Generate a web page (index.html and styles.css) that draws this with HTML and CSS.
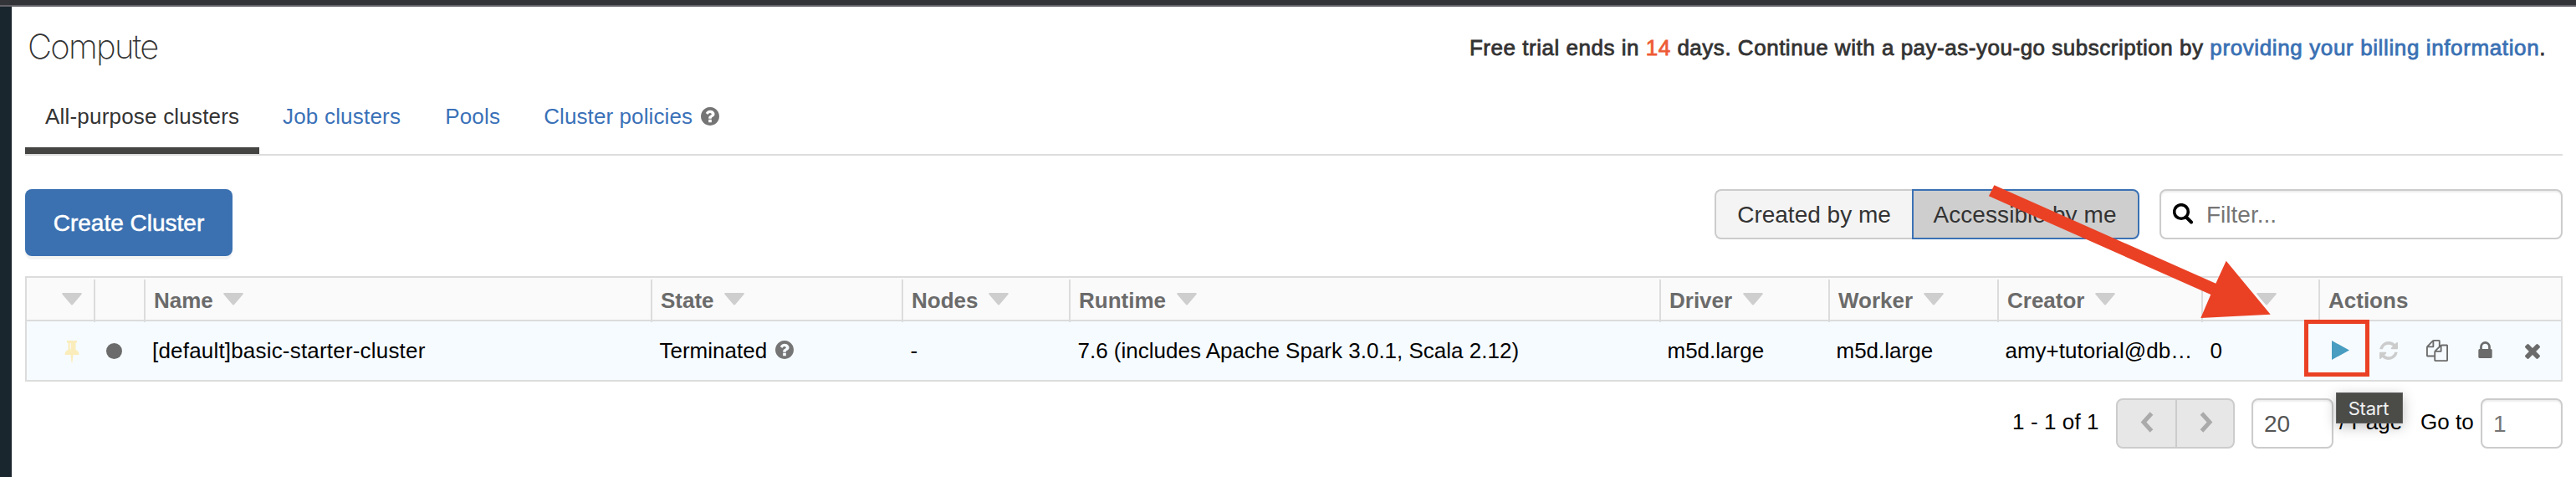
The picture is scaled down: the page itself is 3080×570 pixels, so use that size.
FILE: index.html
```html
<!DOCTYPE html>
<html lang="en">
<head>
<meta charset="utf-8">
<title>Compute</title>
<link rel="stylesheet" href="styles.css">
</head>
<body>
<svg class="defs" width="0" height="0">
  <symbol id="tri" viewBox="0 0 24 15"><path d="M1.500 0h21Q24.500 0 23.500 1.800L13.500 13.500Q12 15.500 10.500 13.500L.5 1.800Q-.5 0 1.500 0z"/></symbol>
  <symbol id="help" viewBox="0 0 1536 1536"><path d="M896 1248v-192q0-14-9-23t-23-9H672q-14 0-23 9t-9 23v192q0 14 9 23t23 9h192q14 0 23-9t9-23zm256-672q0-88-55.500-163T958 297t-170-41q-243 0-371 213-15 24 8 42l132 100q7 6 19 6 16 0 25-12 53-68 86-92 34-24 86-24 48 0 85.500 26t37.500 59q0 38-20 61t-68 45q-63 28-115.500 86.500T640 892v36q0 14 9 23t23 9h192q14 0 23-9t9-23q0-19 21.500-49.500T972 829q32-18 49-28.500t46-35 44.500-48 28-60.500 12.500-81zm384 192q0 209-103 385.500T1153.500 1433 768 1536t-385.500-103T103 1153.500 0 768t103-385.500T382.500 103 768 0t385.500 103T1433 382.500 1536 768z"/></symbol>
</svg>
<div class="topbar"></div>
<div class="shell">
  <aside class="side"></aside>
  <main class="main">
    <header class="head">
      <h1 class="title">Compute</h1>
      <p class="trial">Free trial ends in <b class="days">14</b> days. Continue with a pay-as-you-go subscription by <a class="link">providing your billing information</a>.</p>
    </header>
    <nav class="tabs">
      <a class="tab active">All-purpose clusters</a>
      <a class="tab">Job clusters</a>
      <a class="tab">Pools</a>
      <a class="tab policies">Cluster policies<svg class="help"><use href="#help"/></svg></a>
    </nav>
    <section class="tools">
      <button class="create">Create Cluster</button>
      <div class="right">
        <div class="seg"><span class="opt first">Created by me</span><span class="opt on">Accessible by me</span></div>
        <div class="filter"><svg class="search" viewBox="0 0 24 25"><circle cx="10" cy="10" r="8.300" fill="none" stroke="#000" stroke-width="3.600"/><path d="M16 16.500l6 6" stroke="#000" stroke-width="4" stroke-linecap="round"/></svg><span>Filter...</span></div>
      </div>
    </section>
    <div class="table">
      <div class="row hrow">
        <div class="c pinh"><svg class="tri"><use href="#tri"/></svg></div>
        <div class="c"></div>
        <div class="c">Name<svg class="tri"><use href="#tri"/></svg></div>
        <div class="c">State<svg class="tri"><use href="#tri"/></svg></div>
        <div class="c">Nodes<svg class="tri"><use href="#tri"/></svg></div>
        <div class="c">Runtime<svg class="tri"><use href="#tri"/></svg></div>
        <div class="c">Driver<svg class="tri"><use href="#tri"/></svg></div>
        <div class="c">Worker<svg class="tri"><use href="#tri"/></svg></div>
        <div class="c">Creator<svg class="tri"><use href="#tri"/></svg></div>
        <div class="c lasth"><svg class="tri"><use href="#tri"/></svg></div>
        <div class="c">Actions</div>
      </div>
      <div class="row drow">
        <div class="d pin"><svg class="pinicon" viewBox="0 0 18 26"><path d="M3 0h12v2.500h-1.500V11q4 1.500 4 6h-7L9.500 26h-1L7.500 17h-7q0-4.500 4-6V2.500H3z"/><path d="M7.200 3v7.500" stroke="#f7fbff" stroke-width="1"/></svg></div>
        <div class="d dotcell"><i class="dot"></i></div>
        <div class="d name">[default]basic-starter-cluster</div>
        <div class="d">Terminated<svg class="help"><use href="#help"/></svg></div>
        <div class="d">-</div>
        <div class="d run">7.6 (includes Apache Spark 3.0.1, Scala 2.12)</div>
        <div class="d spec">m5d.large</div>
        <div class="d spec">m5d.large</div>
        <div class="d creator">amy+tutorial@db…</div>
        <div class="d">0</div>
        <div class="d acts">
          <svg class="play" viewBox="0 0 21 23"><path d="M0 0v23l21-11.500z"/></svg>
          <svg class="refresh" viewBox="0 0 1536 1536"><path d="M1511 928q0 5-1 7-64 268-268 434.500T764 1536q-146 0-282.500-55T238 1324l-129 129q-19 19-45 19t-45-19-19-45V960q0-26 19-45t45-19h448q26 0 45 19t19 45-19 45l-137 137q71 66 161 102t187 36q134 0 250-65t186-179q11-17 53-117 8-23 30-23h192q13 0 22.500 9.500t9.500 22.500zm25-800v448q0 26-19 45t-45 19h-448q-26 0-45-19t-19-45 19-45l138-138Q969 256 768 256q-134 0-250 65T332 500q-11 17-53 117-8 23-30 23H50q-13 0-22.500-9.500T18 608v-7q65-268 270-434.500T768 0q146 0 284 55.500T1297 212l130-129q19-19 45-19t45 19 19 45z"/></svg>
          <svg class="copy" viewBox="0 0 1792 1792"><path d="M1696 384q40 0 68 28t28 68v1216q0 40-28 68t-68 28H736q-40 0-68-28t-28-68v-288H96q-40 0-68-28t-28-68V640q0-40 20-88t48-76L476 68q28-28 76-48t88-20h416q40 0 68 28t28 68v328q68-40 128-40h416zm-544 213L853 896h299V597zM512 213L213 512h299V213zm196 647l316-316V128H640v416q0 40-28 68t-68 28H128v640h512v-256q0-40 20-88t48-76zm956 804V512h-384v416q0 40-28 68t-68 28H768v640h896z"/></svg>
          <svg class="lock" viewBox="0 0 1152 1408"><path d="M320 640h512V448q0-106-75-181t-181-75-181 75-75 181v192zm832 96v576q0 40-28 68t-68 28H96q-40 0-68-28t-28-68V736q0-40 28-68t68-28h32V448q0-184 132-316T576 0t316 132 132 316v192h32q40 0 68 28t28 68z"/></svg>
          <svg class="del" viewBox="0 0 1188 1188"><path d="M1188 956q0 40-28 68l-136 136q-28 28-68 28t-68-28L594 866l-294 294q-28 28-68 28t-68-28L28 1024Q0 996 0 956t28-68l294-294L28 300Q0 272 0 232t28-68L164 28q28-28 68-28t68 28l294 294L888 28q28-28 68-28t68 28l136 136q28 28 28 68t-28 68L866 594l294 294q28 28 28 68z"/></svg>
        </div>
      </div>
    </div>
    <footer class="pager">
      <span class="count">1 - 1 of 1</span>
      <div class="btns"><span class="pb"><svg class="chev" viewBox="0 0 17 25"><path d="M13.500 2L4 12.500 13.500 23"/></svg></span><span class="pb"><svg class="chev" viewBox="0 0 17 25"><path d="M3.500 2L13 12.500 3.500 23"/></svg></span></div>
      <div class="box size">20</div>
      <span class="per">/ Page</span>
      <span class="goto">Go to</span>
      <div class="box page">1</div>
    </footer>
  </main>
</div>
<div class="tip">Start</div>
<div class="mark"></div>
<svg class="arrow" viewBox="2370 215 350 170"><path d="M2384.400 221.300L2649.300 338.700L2661.700 311.700L2714.700 375.700L2631.300 380L2643.300 352L2377.900 234.300z"/></svg>
</body>
</html>
```
FILE: styles.css
```css
* { box-sizing: border-box; }
body { margin: 0; width: 3080px; height: 570px; overflow: hidden; background: #fff; position: relative; color: #333; font: 26px/30px "Liberation Sans", Arial, sans-serif; }
.defs { position: absolute; }
svg { flex: none; display: block; }
.topbar { height: 8px; background: #333438; border-bottom: 2px solid #64636a; }
.shell { display: flex; height: 562px; }
.side { width: 14px; background: #1a262d; flex: none; }
.main { flex: 1; padding: 0 16px; }
.head { display: flex; justify-content: space-between; height: 109px; }
.title { margin: 24px 0 0 3px; font: 200 40px/48px Inter, "Liberation Sans", sans-serif; letter-spacing: -1.750px; }
.trial { margin: 34px 20px 0 0; line-height: 30px; -webkit-text-stroke: .8px currentColor; letter-spacing: .520px; white-space: nowrap; }
.days { font-weight: 400; color: #ee5a35; }
.link { color: #3a71b4; letter-spacing: .620px; }
.tabs { display: flex; height: 69px; border-bottom: 2px solid #ddd; color: #3a71b8; }
.tab { display: flex; padding: 7px 25px 0 28px; height: 67px; line-height: 30px; letter-spacing: .2px; white-space: nowrap; }
.tab.active { color: #333; width: 280px; padding: 7px 0 0 24px; border-bottom: 8px solid #444442; }
.tab.active + .tab { padding-left: 28px; }
.tab.policies { padding-left: 27px; letter-spacing: .1px; }
.help { width: 22px; height: 22px; fill: #757575; margin: 4px 0 0 10px; }
.tools { display: flex; justify-content: space-between; padding-top: 40px; height: 144px; }
.create { width: 248px; height: 80px; border: 0; border-radius: 8px; background: #3b71b1; color: #fff; font: 28px/34px "Liberation Sans", Arial, sans-serif; -webkit-text-stroke: .5px #fff; padding: 1px 0 0; box-shadow: 0 4px 0 #f4f4f4; }
.right { display: flex; gap: 24px; font-size: 28px; }
.seg { display: flex; height: 60px; line-height: 58px; }
.opt { border: 2px solid #ccc; text-align: center; }
.first { width: 236px; border-right: 0; border-radius: 8px 0 0 8px; background: #f4f4f4; }
.on { width: 272px; border-color: #3a71b4; border-radius: 0 8px 8px 0; background: #cecece; letter-spacing: .080px; padding-right: 2px; }
.filter { width: 482px; height: 60px; border: 2px solid #ccc; border-radius: 8px; display: flex; padding-left: 14px; gap: 16px; color: #757575; line-height: 58px; box-shadow: inset 0 2px 2px #eee; }
.search { width: 24px; height: 25px; margin-top: 15px; }
.table { border: 2px solid #dcdcdc; }
.row { display: grid; grid-template-columns: 82px 60px 606px 300px 200px 706px 202px 202px 244px 140px 288px; }
.hrow { height: 50px; background: #fafafa; font-weight: 700; color: #6b6b6b; padding-top: 2px; }
.c { display: flex; line-height: 51px; border-right: 2px solid #dcdcdc; padding-left: 10px; }
.c:last-child { border: 0; }
.tri { width: 24px; height: 15px; fill: #cecece; margin: 16px 0 0 12.500px; }
.pinh .tri { margin-left: 32px; }
.lasth .tri { margin-left: 54px; }
.drow { height: 72px; border-top: 2px solid #dcdcdc; background: #f6fbff; color: #000; line-height: 70px; }
.d { display: flex; padding-left: 8.500px; white-space: nowrap; }
.name { padding-left: 8px; letter-spacing: .190px; }
.spec, .creator { padding-left: 7.500px; }
.drow .help { margin: 23px 0 0 10px; }
.pin { padding: 23px 0 0 45px; }
.pinicon { width: 18px; height: 26px; fill: #faedbb; }
.dot { width: 19px; height: 19px; border-radius: 50%; background: #6b6b6b; margin: 26px 0 0 4px; }
.acts { padding: 0 0 0 14px; fill: #6b6b6b; align-items: flex-start; }
.play { width: 21px; height: 23px; fill: #489dc0; margin-top: 23px; }
.refresh { width: 22px; height: 22px; fill: #ccc; margin: 24px 0 0 36px; }
.copy { width: 26px; height: 26px; margin: 22px 0 0 34px; }
.lock { width: 17px; height: 20px; margin: 24px 0 0 36px; }
.del { width: 18px; height: 18px; margin: 27px 0 0 39px; }
.pager { display: flex; justify-content: flex-end; padding-top: 20px; color: #000; line-height: 57px; }
.count { width: 124px; letter-spacing: .1px; }
.btns { display: flex; width: 142px; height: 60px; border: 2px solid #ccc; border-radius: 8px; background: #e7e7e7; margin-right: 20px; }
.pb { width: 70px; padding: 14px 0 0 27px; }
.pb + .pb { border-left: 2px solid #ccc; width: 69px; padding-left: 26px; }
.chev { width: 17px; height: 25px; fill: none; stroke: #aaa; stroke-width: 5; }
.box { width: 98px; height: 60px; border: 2px solid #ccc; border-radius: 8px; font-size: 28px; color: #555; padding-left: 13px; line-height: 58px; box-shadow: inset 0 2px 2px #eee; }
.per { width: 97px; margin-left: 7px; }
.goto { width: 72px; }
.page { color: #757575; }
.tip { position: absolute; left: 2793px; top: 469px; width: 80px; height: 37px; background: #4b4b48; border: 1px solid #5e605e; color: #f0f0f0; font: 22px/37px Inter, sans-serif; letter-spacing: -.2px; text-indent: -2px; text-align: center; box-shadow: 0 4px 16px rgba(0,0,0,.25); }
.mark { position: absolute; left: 2755px; top: 382px; width: 78px; height: 68px; border: 5px solid #ea4125; }
.arrow { position: absolute; left: 2370px; top: 215px; width: 350px; height: 170px; fill: #ea4125; }
```
